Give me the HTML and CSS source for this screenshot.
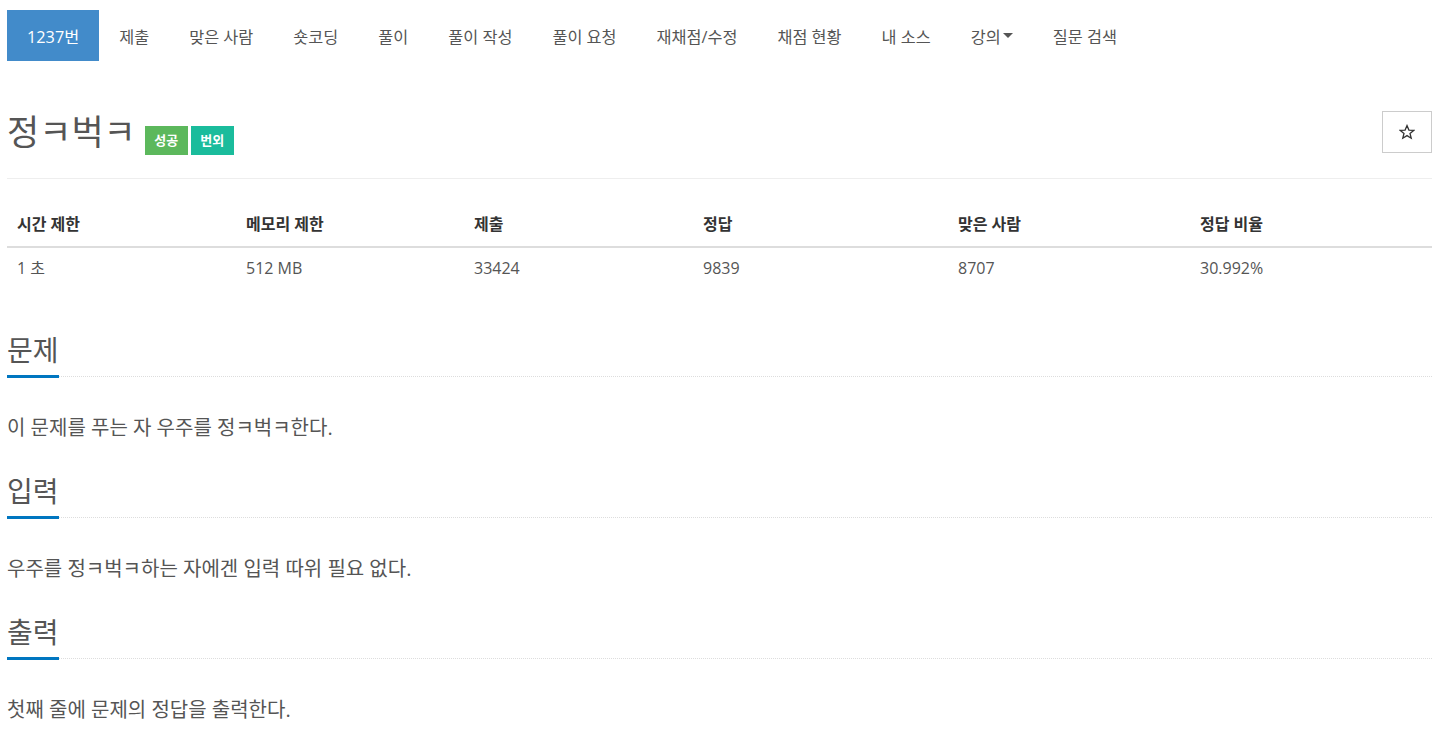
FILE: index.html
```html
<!DOCTYPE html>
<html lang="ko">
<head>
<meta charset="utf-8">
<title>1237번: 정ㅋ벅ㅋ</title>
<link rel="stylesheet" href="styles.css">
</head>
<body>
<div class="container">
  <ul class="tabs">
    <li class="tab active">1237번</li>
    <li class="tab">제출</li>
    <li class="tab">맞은 사람</li>
    <li class="tab">숏코딩</li>
    <li class="tab">풀이</li>
    <li class="tab">풀이 작성</li>
    <li class="tab">풀이 요청</li>
    <li class="tab">재채점/수정</li>
    <li class="tab">채점 현황</li>
    <li class="tab">내 소스</li>
    <li class="tab">강의<span class="caret"></span></li>
    <li class="tab">질문 검색</li>
  </ul>

  <div class="page-header">
    <div class="title-row">
      <h1 class="title">정ㅋ벅ㅋ</h1>
      <span class="label label-success">성공</span>
      <span class="label label-extra">번외</span>
    </div>
    <button class="star-btn" type="button" aria-label="즐겨찾기">
      <svg width="16" height="16" viewBox="0 0 16 16"><path d="M8 1.6 L9.9 6.1 L14.7 6.4 L11 9.5 L12.2 14.2 L8 11.6 L3.8 14.2 L5 9.5 L1.3 6.4 L6.1 6.1 Z" fill="none" stroke="#333" stroke-width="1.3" stroke-linejoin="miter"/></svg>
    </button>
  </div>

  <table class="info">
    <thead>
      <tr>
        <th class="c1">시간 제한</th>
        <th class="c2">메모리 제한</th>
        <th class="c3">제출</th>
        <th class="c4">정답</th>
        <th class="c5">맞은 사람</th>
        <th class="c6">정답 비율</th>
      </tr>
    </thead>
    <tbody>
      <tr>
        <td>1 초</td>
        <td>512 MB</td>
        <td>33424</td>
        <td>9839</td>
        <td>8707</td>
        <td>30.992%</td>
      </tr>
    </tbody>
  </table>

  <section class="problem-section">
    <div class="headline"><h2>문제</h2></div>
    <p class="problem-text">이 문제를 푸는 자 우주를 정ㅋ벅ㅋ한다.</p>
  </section>
  <section class="problem-section">
    <div class="headline"><h2>입력</h2></div>
    <p class="problem-text">우주를 정ㅋ벅ㅋ하는 자에겐 입력 따위 필요 없다.</p>
  </section>
  <section class="problem-section">
    <div class="headline"><h2>출력</h2></div>
    <p class="problem-text">첫째 줄에 문제의 정답을 출력한다.</p>
  </section>
</div>
</body>
</html>
```

FILE: styles.css
```css
* { box-sizing: border-box; }

html, body {
  margin: 0;
  padding: 0;
  background: #fff;
}

body {
  font-family: "Open Sans", "Noto Sans CJK KR", sans-serif;
  font-size: 16px;
  color: #555;
}

.container {
  width: 1425px;
  margin-left: 7px;
}

.tabs {
  list-style: none;
  margin: 10px 0 0 0;
  padding: 0;
  display: flex;
  height: 51px;
}

.tab {
  display: flex;
  align-items: center;
  padding: 0 20px;
  height: 51px;
  font-size: 16.3px;
  color: #555;
  white-space: nowrap;
}

.tab.active {
  background: #428bca;
  color: #fff;
}

.caret {
  display: inline-block;
  width: 0;
  height: 0;
  margin-left: 2px;
  border-top: 5px solid #555;
  border-left: 5px solid transparent;
  border-right: 5px solid transparent;
}

.page-header {
  margin-top: 50px;
  padding-bottom: 23px;
  border-bottom: 1px solid #eee;
  display: flex;
  justify-content: space-between;
  align-items: flex-start;
}

.title-row {
  display: flex;
  align-items: baseline;
  gap: 3px;
}

.title {
  margin: 0 6px 0 0;
  font-size: 35px;
  font-weight: 400;
  line-height: 42px;
  color: #555;
}

.label {
  display: inline-block;
  height: 29px;
  line-height: 29px;
  padding: 0 9.5px;
  font-size: 13px;
  font-weight: 600;
  color: #fff;
}

.label-success { background: #5cb85c; }
.label-extra { background: #1abc9c; }

.star-btn {
  width: 50px;
  height: 42px;
  border: 1px solid #ccc;
  background: #fff;
  padding: 0;
  display: flex;
  align-items: center;
  justify-content: center;
}

.info {
  width: 100%;
  border-collapse: collapse;
  margin-top: 23px;
  table-layout: fixed;
}

.info th {
  text-align: left;
  font-size: 16px;
  font-weight: 700;
  color: #333;
  padding: 12px 10px;
  line-height: 20px;
  border-bottom: 2px solid #ddd;
}

.info td {
  font-size: 16px;
  padding: 10px 10px 12px;
  line-height: 20px;
  color: #555;
}

.c1 { width: 229px; }
.c2 { width: 228px; }
.c3 { width: 229px; }
.c4 { width: 255px; }
.c5 { width: 242px; }
.c6 { width: 242px; }

.problem-section { margin-top: 46px; }
.problem-section + .problem-section { margin-top: 36px; }

.headline {
  border-bottom: 1px dotted #ddd;
}

.headline h2 {
  display: inline-block;
  margin: 0 0 -2px 0;
  font-size: 28px;
  font-weight: 400;
  line-height: 29px;
  padding-bottom: 10px;
  color: #555;
  border-bottom: 3px solid #0076c0;
}

.problem-text {
  margin: 37px 0 0 0;
  font-size: 20px;
  line-height: 27px;
  color: #555;
}
```
